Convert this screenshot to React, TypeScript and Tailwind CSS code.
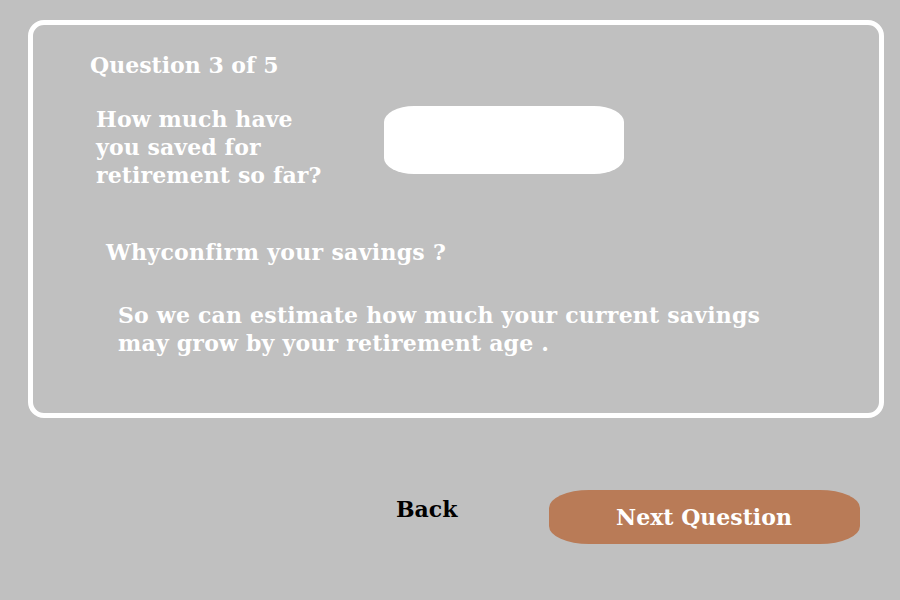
const App = () => {
  return (
    <div
      className="w-[900px] h-[600px] bg-[#c0c0c0] pt-[20px] pl-[28px] font-bold"
      style={{ fontFamily: '"DejaVu Serif", serif' }}
    >
      <div className="w-[856px] h-[398px] border-[5px] border-white rounded-[16px] flex flex-col">
        <h1 className="text-white text-[22px] leading-[28px] mt-[26px] ml-[57px]">
          Question 3 of 5
        </h1>
        <div className="flex mt-[26px]">
          <p className="text-white text-[22px] leading-[28px] tracking-[0.1px] ml-[63px] w-[260px]">
            How much have
            <br />
            you saved for
            <br />
            retirement so far?
          </p>
          <div className="ml-[28px] mt-[1px] w-[240px] h-[68px] bg-white rounded-[30px/16px]" />
        </div>
        <h2 className="text-white text-[22px] leading-[28px] tracking-[0.3px] mt-[49px] ml-[73px]">
          Whyconfirm your savings ?
        </h2>
        <p className="text-white text-[22px] leading-[28px] tracking-[0.2px] mt-[35px] ml-[85px]">
          So we can estimate how much your current savings
          <br />
          may grow by your retirement age .
        </p>
      </div>
      <div className="flex items-center mt-[72px]">
        <button className="ml-[368px] text-black text-[22px] leading-[28px] mt-[-16px]">
          Back
        </button>
        <button className="ml-[91px] w-[311px] h-[54px] bg-[#b97b57] rounded-[40px/18px] text-white text-[22px]">
          Next Question
        </button>
      </div>
    </div>
  );
};

export default App;
